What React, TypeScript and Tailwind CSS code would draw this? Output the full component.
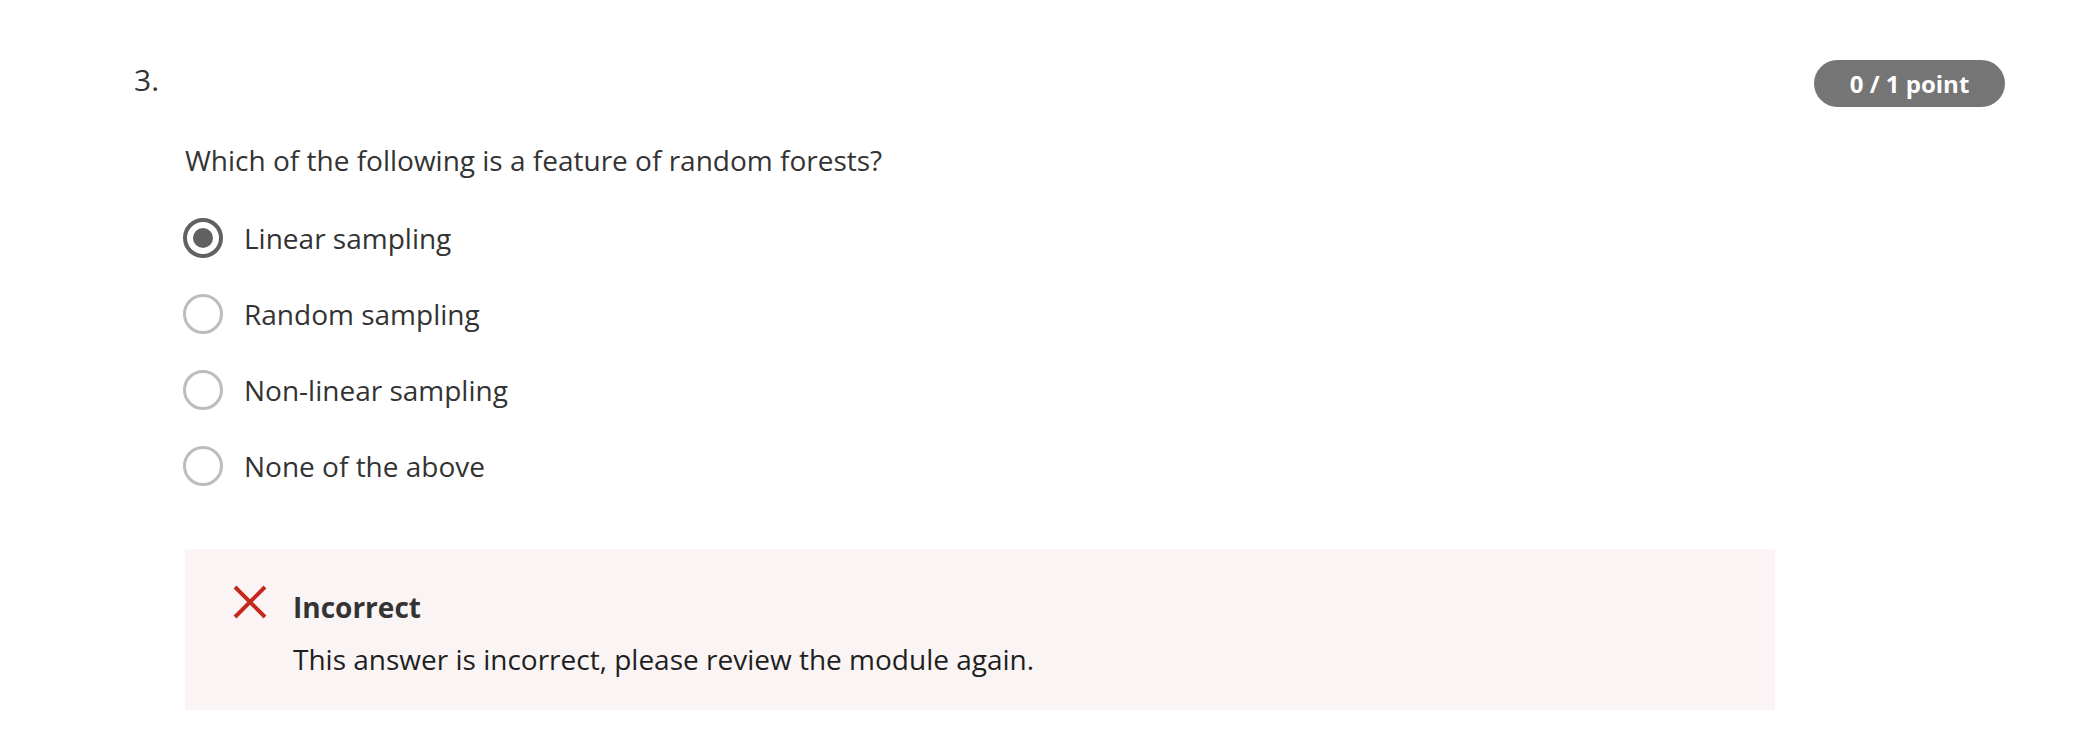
import React from "react";

const options = ["Linear sampling", "Random sampling", "Non-linear sampling", "None of the above"];

function Radio({ checked }: { checked: boolean }) {
  if (checked) {
    return (
      <div className="-ml-[2px] flex h-[40px] w-[40px] shrink-0 items-center justify-center rounded-full border-[4px] border-[#616161]">
        <div className="h-[20px] w-[20px] rounded-full bg-[#616161]" />
      </div>
    );
  }
  return <div className="-ml-[2px] h-[40px] w-[40px] shrink-0 rounded-full border-[3px] border-[#bdbdbd]" />;
}

export default function App() {
  return (
    <div className="h-[756px] w-[2074px] bg-white font-['Open_Sans',sans-serif] text-[#333333]">
      <div className="flex items-start justify-between pl-[134px] pr-[69px] pt-[60px]">
        <div className="text-[30px] leading-[40px]">3.</div>
        <div className="flex h-[47px] w-[191px] items-center justify-center rounded-full bg-[#757575] text-[24px] font-bold text-white">
          0 / 1 point
        </div>
      </div>
      <div className="ml-[185px] w-[1590px]">
        <div className="mt-[34px] text-[28px] leading-[38px]">Which of the following is a feature of random forests?</div>
        <div className="mt-[39px] flex flex-col gap-[36px]">
          {options.map((o, i) => (
            <div key={o} className="flex h-[40px] items-center gap-[21px]">
              <Radio checked={i === 0} />
              <span className="text-[28px] leading-[40px]">{o}</span>
            </div>
          ))}
        </div>
        <div className="mt-[63px] flex h-[161px] items-start bg-[#faf4f4] pl-[48px] pt-[36px]">
          <svg width="34" height="34" viewBox="0 0 34 34" className="shrink-0">
            <path d="M2 2 L32 32 M32 2 L2 32" stroke="#c5281c" strokeWidth="4" fill="none" />
          </svg>
          <div className="ml-[26px] mt-[2px] flex flex-col gap-[12px]">
            <div className="text-[28px] font-bold leading-[40px]">Incorrect</div>
            <div className="text-[28px] leading-[40px] text-[#1f1f1f]">
              This answer is incorrect, please review the module again.
            </div>
          </div>
        </div>
      </div>
    </div>
  );
}
